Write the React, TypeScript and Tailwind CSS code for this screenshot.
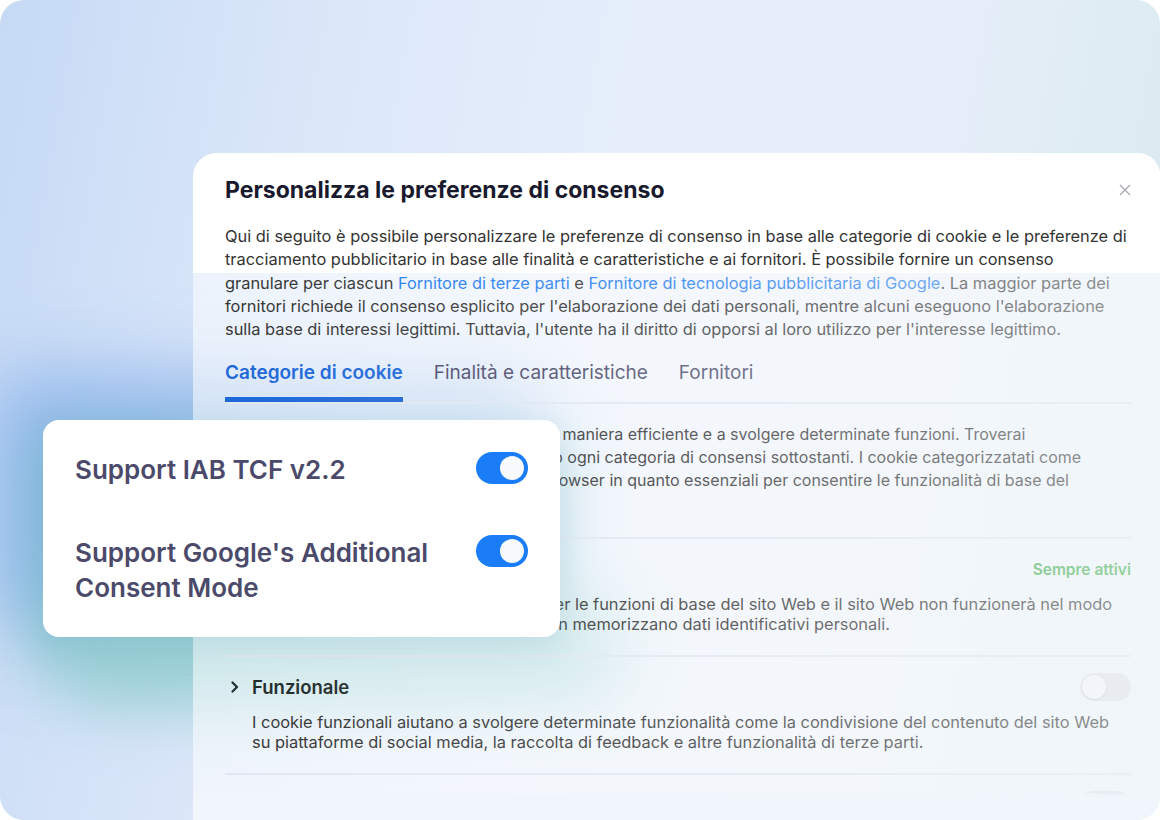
import React from "react";

function Toggle({ on }: { on: boolean }) {
  return on ? (
    <div className="flex h-[32px] w-[52px] shrink-0 items-center justify-end rounded-full bg-[#1a7cf6] px-[4px]">
      <div className="h-[24px] w-[24px] rounded-full bg-[#f8f9fb]" />
    </div>
  ) : (
    <div className="flex h-[28px] w-[51px] shrink-0 items-center justify-start rounded-full bg-[#e0e4e9] px-[2px]">
      <div className="h-[24px] w-[24px] rounded-full bg-[#f4f6f8] shadow-[0_1px_2px_rgba(0,0,0,0.12)]" />
    </div>
  );
}

function Chevron() {
  return (
    <svg width="10" height="12" viewBox="0 0 10 12" className="shrink-0">
      <polyline points="2.5,1.5 7,6 2.5,10.5" fill="none" stroke="#1f2b2b" strokeWidth="2.2" strokeLinecap="round" strokeLinejoin="round" />
    </svg>
  );
}

function Section({
  title,
  right,
  desc,
}: {
  title: string;
  right: React.ReactNode;
  desc: string;
}) {
  return (
    <div className="border-t-2 border-[#e1e7f2] pt-[16px] pb-[21px]">
      <div className="flex h-[28px] items-center justify-between">
        <div className="flex items-center gap-[12px] pl-[5px]">
          <Chevron />
          <span className="text-[18.5px] font-semibold text-[#1c2828]">{title}</span>
        </div>
        {right}
      </div>
      <p className="mt-[11px] pl-[27px] text-[16.4px] leading-[20px] text-[#333]">{desc}</p>
    </div>
  );
}

export default function App() {
  return (
    <div className="relative h-[820px] w-[1160px] overflow-hidden rounded-[24px] bg-[linear-gradient(100deg,#c6daf5_0%,#dbe7f9_25%,#e6eefb_50%,#e5eef8_76%,#d6e9ed_100%)] [font-family:Inter,'Noto_Sans',sans-serif]">
      {/* glow behind the modal */}
      <div className="absolute left-[43px] top-[420px] h-[217px] w-[517px] rounded-[16px] shadow-[0_24px_60px_14px_rgba(120,194,200,0.6),-36px_-28px_70px_18px_rgba(108,158,230,0.58)]" />
      <div className="absolute left-[50px] top-[590px] h-[120px] w-[580px] rounded-full bg-[#98cfd2] opacity-80 blur-[32px]" />

      <div className="relative pt-[153px] pl-[193px]">
        <div className="relative h-[700px] w-[967px] overflow-hidden rounded-tl-[24px] rounded-tr-[22px] bg-[rgba(255,255,255,0.55)] pl-[32px] pr-[29px]">
          <div className="absolute left-0 right-0 top-0 h-[120px] bg-white" />
          <div className="relative pt-[23px]">
            <div className="flex items-center justify-between">
              <h1 className="text-[23px] font-bold leading-[28px] text-[#191a2e]">
                Personalizza le preferenze di consenso
              </h1>
              <svg width="12" height="12" viewBox="0 0 12 12">
                <path d="M1 1L11 11M11 1L1 11" stroke="#a9abb0" strokeWidth="1.4" />
              </svg>
            </div>
            <p className="mt-[21px] text-[16.4px] leading-[23.3px] text-[#333]">
              Qui di seguito è possibile personalizzare le preferenze di consenso in base alle categorie di cookie e le preferenze di tracciamento pubblicitario in base alle finalità e caratteristiche e ai fornitori. È possibile fornire un consenso granulare per ciascun{" "}
              <span className="text-[#1f7cf0]">Fornitore di terze parti</span> e{" "}
              <span className="text-[#1f7cf0]">Fornitore di tecnologia pubblicitaria di Google</span>. La maggior parte dei fornitori richiede il consenso esplicito per l'elaborazione dei dati personali, mentre alcuni eseguono l'elaborazione sulla base di interessi legittimi. Tuttavia, l'utente ha il diritto di opporsi al loro utilizzo per l'interesse legittimo.
            </p>
            <div className="mt-[20px] flex gap-[31px] border-b-2 border-[#e1e7f2] text-[19px] leading-[24px]">
              <div className="border-b-[5px] border-[#1b66d8] pb-[12px] font-semibold text-[#1b66d8]">Categorie di cookie</div>
              <div className="pb-[12px] text-[#4b4a6b]">Finalità e caratteristiche</div>
              <div className="pb-[12px] text-[#4b4a6b]">Fornitori</div>
            </div>
            <p className="pt-[19px] pb-[22px] text-[16px] leading-[23px] text-[#333]">
              Utilizziamo i cookie per aiutarti a navigare in maniera efficiente e a svolgere determinate funzioni. Troverai
              <br />
              informazioni dettagliate su tutti i cookie sotto ogni categoria di consensi sottostanti. I cookie categorizzatati come
              <br />
              "Necessari" vengono memorizzati sul tuo browser in quanto essenziali per consentire le funzionalità di base del
              <br />
              sito.
            </p>
            <Section
              title="Necessario"
              right={<span className="text-[15.5px] font-semibold text-[#3fae4a]">Sempre attivi</span>}
              desc="I cookie necessari sono fondamentali per le funzioni di base del sito Web e il sito Web non funzionerà nel modo previsto senza di essi. Questi cookie non memorizzano dati identificativi personali."
            />
            <Section
              title="Funzionale"
              right={<Toggle on={false} />}
              desc="I cookie funzionali aiutano a svolgere determinate funzionalità come la condivisione del contenuto del sito Web su piattaforme di social media, la raccolta di feedback e altre funzionalità di terze parti."
            />
            <Section
              title="Analitica"
              right={<Toggle on={false} />}
              desc="I cookie analitici vengono utilizzati per comprendere come i visitatori interagiscono con il sito Web."
            />
          </div>
          <div className="pointer-events-none absolute left-0 right-0 top-[120px] bottom-0 bg-[linear-gradient(90deg,rgba(244,248,252,0)_0%,rgba(244,248,252,0.15)_40%,rgba(242,246,251,0.5)_100%)]" />
          <div className="pointer-events-none absolute left-0 right-0 top-[640px] bottom-0 bg-[linear-gradient(180deg,rgba(241,246,252,0.3)_0px,rgba(241,246,252,1)_3px)]" />
        </div>
      </div>

      <div className="absolute left-[43px] top-[420px] w-[517px] rounded-[16px] bg-white px-[32px] pt-[32px] pb-[32px] shadow-[0_10px_30px_rgba(90,160,180,0.18)]">
        <div className="flex flex-col gap-[48px] text-[26px] font-semibold leading-[35px] text-[#4b4a6b]">
          <div className="flex items-start justify-between">
            <span>Support IAB TCF v2.2</span>
            <Toggle on />
          </div>
          <div className="flex items-start justify-between">
            <span className="w-[370px]">Support Google's Additional Consent Mode</span>
            <Toggle on />
          </div>
        </div>
      </div>
    </div>
  );
}
